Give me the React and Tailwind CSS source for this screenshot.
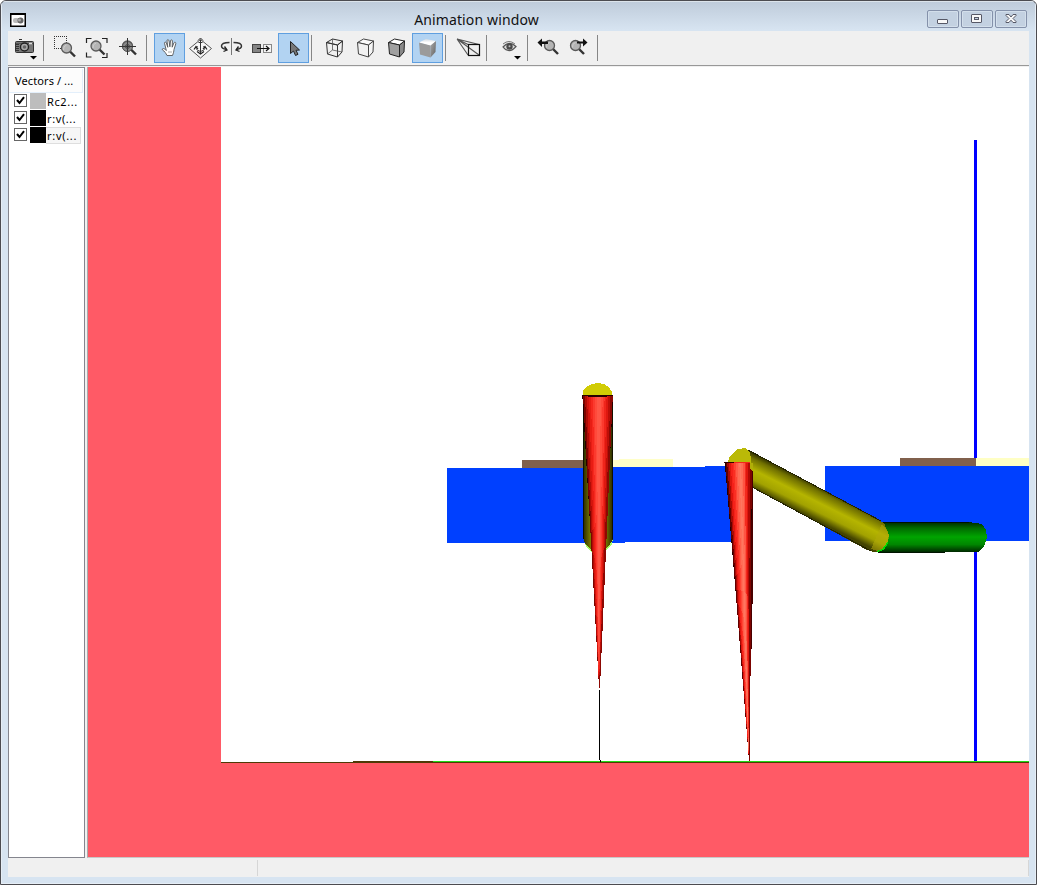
import React from "react";

/* Every toolbar glyph is drawn in window coordinates; x is the left edge of its button. */
function Tool({ x, label, w = 31, active = false, children }) {
  return (
    <button
      aria-label={label}
      className={
        active
          ? "h-[30px] shrink-0 bg-[#b2d3f2] outline-1 -outline-offset-1 outline-[#5f9fe0]"
          : "h-[30px] shrink-0"
      }
    >
      <svg width={w} height="30" viewBox={`${x} 33 ${w} 30`} fill="none" className="block">
        {children}
      </svg>
    </button>
  );
}

function Sep({ className }) {
  return <div className={`h-[26px] w-px shrink-0 bg-[#868686] ${className}`} />;
}

function Lens({ cx, cy, r = 5, dot = false }) {
  const k = r * 0.7;
  return (
    <g>
      <path d={`M${cx + k} ${cy + k}l5 5`} stroke="#333" strokeWidth="2.4" />
      <circle cx={cx} cy={cy} r={r} fill="#b4b4b4" stroke="#5a5a5a" strokeWidth="1.3" />
      {!dot && <path d={`M${cx - 3} ${cy + 2}q-.5-4 3-5`} stroke="#cfcfcf" />}
    </g>
  );
}

function Cube({ x, front = "none", side = "none", top = "none", line = "#333", wire = false }) {
  return (
    <g stroke={line} strokeLinejoin="round" strokeWidth="1">
      <path d={`M${x} 42.500l6-3.500 10 2-5 4z`} fill={top} />
      <path d={`M${x} 42.500l11 2.500v12L${x + 1} 54z`} fill={front} />
      <path d={`M${x + 11} 45l5-4-.5 11-4.500 5z`} fill={side} />
      {wire && <path d={`M${x + 6} 39v11l9.500 2M${x + 6} 50L${x + 1} 54`} strokeWidth=".8" stroke="#555" />}
    </g>
  );
}

function Toolbar() {
  return (
    <div className="flex h-[35px] shrink-0 items-start border-b border-[#989898] bg-[#f0f0f0] pt-[2px] pl-px">
      <Tool x={9} label="Capture">
        <path d="M19 39.5h3" stroke="#333" />
        <rect x="15.5" y="41.5" width="18" height="11" rx="1" fill="#777" stroke="#333" />
        <path d="M16 43.5h17" stroke="#555" />
        <path d="M15 44.5h4M15 46.5h4M15 48.5h4M15 50.5h4" stroke="#333" />
        <circle cx="24.5" cy="47" r="4" fill="#aaa" stroke="#222" strokeWidth="1.4" />
        <circle cx="24.5" cy="47" r="1.8" fill="#666" />
        <path d="M29 43.5h3" stroke="#ddd" strokeWidth="1.5" />
        <path d="M30 56h7l-3.5 3.5z" fill="#000" />
      </Tool>
      <Sep className="mt-[2px] ml-[3px] mr-[6px]" />
      <Tool x={50} label="Zoom area">
        <path
          d="M54 36.500h13M54 48.500h13M54.500 38v10M66.500 38v10"
          stroke="#333"
          strokeDasharray="1 1"
          shapeRendering="crispEdges"
        />
        <Lens cx={66.500} cy={48} />
      </Tool>
      <Tool x={81} label="Zoom to fit">
        <path d="M86.500 43v-4.500h5M102 38.500h5V43M86.500 52.500v4.500h5M102 57.500h5v-4.500" stroke="#222" strokeWidth="1.2" />
        <Lens cx={96} cy={46} />
      </Tool>
      <Tool x={112} label="Zoom target">
        <Lens cx={127.500} cy={46} dot />
        <circle cx="127.500" cy="46.500" r="5" fill="#888" stroke="#555" />
        <path d="M119 46.500h17M127.500 38v17" stroke="#333" />
        <circle cx="127.500" cy="46.500" r="2" stroke="#444" />
      </Tool>
      <Sep className="mt-[2px] ml-[3px] mr-[7px]" />
      <Tool x={154} label="Pan" active>
        <path
          d="M167 55.500c-1-2-2.500-4.500-4.500-5.500-.8-1.500 1-2.200 3-.3l.8.8-1.800-7.300c0-1.500 1.400-1.500 1.900-.2l1.400 4.300-.8-6.500c.1-1.600 1.700-1.500 2 0l.9 6 .6-6c.3-1.400 1.900-1.200 1.900.2l-.2 6.200 1.700-4.300c.8-1.300 2.300-.5 1.900.8L174 49.500c-.2 2-.5 3.500-1.500 6z"
          fill="#fff"
          stroke="#555"
          strokeWidth=".9"
        />
        <path d="M168 52h4" stroke="#aaa" />
      </Tool>
      <Tool x={185} label="Move">
        <path d="M189.500 48.500L200.500 39.500l11 9-11 9.500z" fill="#f8f8f8" stroke="#555" />
        <path d="M200.500 40v13M198.500 42.500h4M198 40.500l2.500-2.500 2.500 2.500M197.500 46c-2.500 3-1 4 3 5.500 4-1.500 5.500-2.500 3-5.500" stroke="#333" />
        <path d="M194 49.500l2-3 2 2.500M203 49l2-2.500 2 3M197 51.500l3.500 2.500 3.500-2.500" stroke="#222" strokeWidth="1.200" />
      </Tool>
      <Tool x={216} label="Rotate">
        <path d="M231.500 38v17" stroke="#777" />
        <path d="M229.500 42.500c-5 0-8 1.500-8 3.500s2 3 5 3.500M233.500 42.500c5 0 8 1.500 8 3.500s-2 3-5 3.500" stroke="#333" strokeWidth="1.500" />
        <path d="M224.500 46.500l2.500 3.500-3.500 1.500M238.500 46.500l-2.500 3.500 3.500 1.500" stroke="#222" strokeWidth="1.300" />
      </Tool>
      <Tool x={247} label="Translate">
        <rect x="252.500" y="44.500" width="8" height="8" fill="#848484" stroke="#444" />
        <rect x="263.500" y="44.500" width="8" height="8" fill="#f4f4f4" stroke="#888" />
        <path d="M257 48.500h12M266 46l3 2.500-3 2.500" stroke="#111" strokeWidth="1.200" />
      </Tool>
      <Tool x={278} label="Select" active>
        <path d="M290.500 41.500v12l3-2.500 2 4.500 2.500-1.200-2-4 3.500-.3z" fill="#777" stroke="#222" />
      </Tool>
      <Sep className="mt-[2px] ml-[2px] mr-[7px]" />
      <Tool x={319} label="Wireframe"><Cube x={326.500} wire /></Tool>
      <Tool x={350} label="Hidden lines"><Cube x={357.500} top="#fafafa" front="#f1f1f1" side="#f5f5f5" line="#444" /></Tool>
      <Tool x={381} label="Shaded with edges"><Cube x={388.500} top="#fff" front="#a0a0a0" side="#888" line="#222" /></Tool>
      <Tool x={412} label="Shaded" active>
        <defs>
          <linearGradient id="cubeTop" x1="0" x2="0" y1="0" y2="1">
            <stop offset="0" stopColor="#d4dbe2" />
            <stop offset=".5" stopColor="#fff" />
            <stop offset="1" stopColor="#fff" />
          </linearGradient>
          <linearGradient id="cubeSide" x1="0" x2="1" y1="0" y2="1">
            <stop offset="0" stopColor="#aaa" />
            <stop offset="1" stopColor="#606060" />
          </linearGradient>
        </defs>
        <path d="M419 42.500l7-3.500 10 2-5.500 5z" fill="url(#cubeTop)" />
        <path d="M419 42.500l11.500 3v12L420 54.500z" fill="#9b9b9b" />
        <path d="M430.500 45.500l5.500-4.500-.5 11-5 5.500z" fill="url(#cubeSide)" />
      </Tool>
      <Sep className="mt-[2px] ml-[2px] mr-[7px]" />
      <Tool x={453} label="Perspective">
        <path d="M457 39l11 16M457 39l11 5.500M457 39l22 5.500M457 39l22 16" stroke="#555" strokeWidth="1.100" />
        <rect x="468.500" y="44.500" width="11" height="11" stroke="#111" strokeWidth="1.200" />
      </Tool>
      <Sep className="mt-[2px] ml-[2px] mr-[7px]" />
      <Tool x={494} label="View">
        <path d="M503 47q6-7 13-.5-7 8-13 .5z" fill="#ddd" stroke="#555" strokeWidth="1.200" />
        <path d="M503 44q6-5 12 0" stroke="#777" />
        <circle cx="509.500" cy="46.500" r="3.200" fill="#4a4a4a" />
        <circle cx="509.500" cy="46.200" r="1" fill="#bbb" />
        <path d="M514 56h7l-3.500 3.500z" fill="#000" />
      </Tool>
      <Sep className="mt-[2px] ml-[2px] mr-[5px]" />
      <Tool x={533} label="Previous view">
        <Lens cx={549.500} cy={45.500} />
        <path d="M537.500 42.500l4.500-4v3h6v2.500h-6v3z" fill="#111" />
      </Tool>
      <Tool x={564} label="Next view">
        <Lens cx={575.500} cy={45.500} />
        <path d="M587.500 42.500l-4.500-4v3h-6v2h6v3z" fill="#111" />
      </Tool>
      <Sep className="mt-[2px] ml-[2px]" />
    </div>
  );
}

function VectorRow({ text, swatch, selected }) {
  return (
    <div className="flex h-[17px] items-start">
      <svg width="13" height="13" viewBox="0 0 13 13" className="mt-px shrink-0">
        <rect x=".5" y=".5" width="12" height="12" fill="#fff" stroke="#666" />
        <path d="M3 6l2.500 3L10 3.200" fill="none" stroke="#000" strokeWidth="2" />
      </svg>
      <span className={`ml-[3px] h-4 w-4 shrink-0 ${swatch}`} />
      <span
        className={
          selected
            ? "h-[17px] w-[35px] overflow-hidden border border-l-0 border-[#dedede] bg-[#f6f6f6] pl-px text-[11px] leading-[16px] tracking-[0.7px] whitespace-nowrap"
            : "h-[17px] w-[35px] overflow-hidden pt-px pl-px text-[11px] leading-[16px] tracking-[0.6px] whitespace-nowrap"
        }
      >
        {text}
      </span>
    </div>
  );
}

function VectorPanel() {
  return (
    <div className="flex w-[77px] shrink-0 flex-col border border-[#84858e] bg-white font-['Noto_Sans',sans-serif] text-black">
      <div className="mt-px mr-px h-[24px] border-r border-b border-[#e3effb] bg-[#fcfcfc] pl-[6px] text-[11px] leading-[23px] tracking-[0.1px] whitespace-nowrap">
        Vectors / ...
      </div>
      <div className="pl-[5px]">
        <VectorRow text="Rc2..." swatch="bg-[#bdbdbd]" />
        <VectorRow text="r:v(..." swatch="bg-black" />
        <VectorRow text="r:v(..." swatch="bg-black" selected />
      </div>
    </div>
  );
}

const CENTER_SHADES = [
  "#7a0500", "#b00c06", "#d4150d", "#e81d14", "#f5281e", "#fb3a2e", "#ff4a3b", "#ff5646",
  "#ff5646", "#ff4a3b", "#fb3a2e", "#f0251b", "#de1810", "#bd0f08", "#8c0803",
];
const TILT_SHADES = [
  "#600000", "#a80a05", "#dc150d", "#f5211a", "#fa2e22", "#ff4534", "#ff5c49", "#ff6d56",
  "#ff7660", "#ff6d56", "#ff5443", "#f42a1e", "#df160e", "#b30a05", "#7c0300",
];

/* A cone seen from the side: thin facets that all run to the tip. */
function Cone({ left, right, top, tipX, tipY, shades }) {
  const step = (right - left) / shades.length;
  return (
    <g>
      <path d={`M${left - 0.7} ${top}L${right + 0.5} ${top}L${tipX} ${tipY - 4}z`} fill="#260000" />
      {shades.map((shade, i) => (
        <path
          key={i}
          d={`M${left + i * step} ${top}H${left + (i + 1) * step + 0.3}L${tipX + 0.5} ${tipY}H${tipX - 0.5}z`}
          fill={shade}
        />
      ))}
    </g>
  );
}

function Scene() {
  return (
    <svg width="941" height="790" viewBox="88 67 941 790" shapeRendering="crispEdges" className="block shrink-0">
      <defs>
        <linearGradient id="post" x1="0" x2="1" y1="0" y2="0">
          <stop offset="0" stopColor="#252500" />
          <stop offset=".22" stopColor="#707000" />
          <stop offset=".5" stopColor="#bcbc00" />
          <stop offset=".78" stopColor="#707000" />
          <stop offset="1" stopColor="#252500" />
        </linearGradient>
        <linearGradient id="arm" gradientUnits="userSpaceOnUse" x1="823" y1="486" x2="808" y2="516">
          <stop offset="0" stopColor="#1b1b00" />
          <stop offset=".2" stopColor="#707000" />
          <stop offset=".5" stopColor="#b5b500" />
          <stop offset=".76" stopColor="#a2a200" />
          <stop offset="1" stopColor="#444400" />
        </linearGradient>
        <linearGradient id="rod" x1="0" x2="0" y1="0" y2="1">
          <stop offset="0" stopColor="#002800" />
          <stop offset=".2" stopColor="#006a00" />
          <stop offset=".5" stopColor="#00a500" />
          <stop offset=".75" stopColor="#008600" />
          <stop offset="1" stopColor="#002800" />
        </linearGradient>
      </defs>

      <rect x="88" y="67" width="941" height="790" fill="#ff5a66" />
      <rect x="221" y="67" width="808" height="695" fill="#fff" />
      <rect x="221" y="762" width="808" height="1" fill="#4f3906" />
      <rect x="353" y="761" width="676" height="1" fill="#24d915" />
      <path d="M353 761h80v1h-80z" fill="#4f3906" />

      <rect x="974" y="140" width="3" height="621" fill="#0000ff" />

      <rect x="522" y="460" width="62" height="8" fill="#80604c" />
      <path d="M613 460l12-1h48v8h-60z" fill="#ffffc8" />
      <path d="M447 468h137v-1h121v-1h27v76H625v1H447z" fill="#0040ff" />
      <rect x="900" y="458" width="76" height="8" fill="#80604c" />
      <rect x="976" y="458" width="53" height="8" fill="#ffffc4" />
      <rect x="825" y="466" width="204" height="75" fill="#0040ff" />

      <path d="M583 538l3 8 5 6h14l7-8 1-6z" fill="#a5ff67" />
      <path d="M583 395h30v144l-4 7-4 3h-14l-5-4-3-7z" fill="url(#post)" />
      <path d="M583.500 395v144" stroke="#111100" />
      <path d="M612.500 395v144" stroke="#111100" />
      <path d="M583 395v-4l3-4 6-3 5-1 7 1 5 3 3 5v3z" fill="#d1cc05" />
      <Cone left={583} right={612.500} top={395} tipX={599.500} tipY={688} shades={CENTER_SHADES} />
      <rect x="582" y="395" width="31" height="1" fill="#280000" />
      <rect x="588" y="396" width="19" height="1" fill="#280000" />
      <rect x="599" y="690" width="1" height="70" fill="#000" />
      <rect x="600" y="760" width="1" height="2" fill="#000" />

      <path d="M881 522h88l13 2 4 6 1 8-3 8-5 6H876z" fill="url(#rod)" />
      <rect x="881" y="522" width="88" height="1" fill="#001300" />
      <rect x="878" y="552" width="67" height="1" fill="#001300" />
      <path d="M748 450L884 523l5 12-2 9-8 8h-5l-7-2L752 487z" fill="url(#arm)" />
      <path d="M882 524l4 5 3 6-1 9-6 5-5 2-6-2z" fill="#b0a90a" opacity=".55" />
      <path d="M877 551.500l6-2 5-7" fill="none" stroke="#00e000" strokeWidth="1.500" />
      <path d="M748 450l133 71M752 487l119 64" fill="none" stroke="#242400" />
      <path d="M728 463l1-5 5-6 4-3 7-1 5 4 1 8v6z" fill="#bab908" />

      <path d="M750 463l1 6 2 3v110l-2 90z" fill="#480000" />
      <Cone left={725.500} right={751.500} top={463} tipX={749.500} tipY={761} shades={TILT_SHADES} />
      <path d="M750 463h3v7h-2l-1-3z" fill="#b1ae08" />
      <rect x="724" y="462" width="10" height="1" fill="#300000" />
      <rect x="734" y="462" width="16" height="1" fill="#f4281c" />
    </svg>
  );
}

function Caption({ label, className, children }) {
  return (
    <button
      aria-label={label}
      className={`flex h-[18px] items-center justify-center rounded-[2px] border border-[#8491aa] bg-[#c3d1e1] ring-1 ring-[#d3dfeb] ring-inset ${className}`}
    >
      <svg width="14" height="12" viewBox="0 0 14 12" fill="#f8f8f8" stroke="#565866" className="block">
        {children}
      </svg>
    </button>
  );
}

function TitleBar() {
  return (
    <div className="flex h-[29px] shrink-0 items-start">
      <svg width="16" height="14" viewBox="0 0 16 14" className="mt-[11px] ml-[9px] shrink-0">
        <rect x=".75" y=".75" width="14.500" height="12.500" fill="#fff" stroke="#000" strokeWidth="1.500" />
        <path d="M0 1h16" stroke="#000" strokeWidth="2" />
        <rect x="3" y="5" width="8" height="5" rx="2" fill="#bbb" />
        <circle cx="10.500" cy="7.500" r="3" fill="#666" />
        <circle cx="9.500" cy="7" r="1.500" fill="#aaa" />
      </svg>
      <h1 className="mt-[6px] flex-1 text-center font-['Noto_Sans',sans-serif] text-[14px] leading-[24px] font-normal tracking-[0.13px] text-[#111]">
        Animation window
      </h1>
      <div className="mt-[8px] mr-[9px] flex justify-end">
        <Caption label="Minimize" className="w-[32px]">
          <rect x="1.500" y="6.500" width="10" height="4" rx=".5" />
        </Caption>
        <Caption label="Maximize" className="ml-[2px] w-[32px]">
          <rect x="1.500" y="1.500" width="10" height="8" rx=".5" />
          <rect x="4.500" y="4.500" width="4" height="2" fill="#c3d1e1" />
        </Caption>
        <Caption label="Close" className="ml-[2px] w-[32px]">
          <path d="M2 1.500h3L7 4l2-2.500h3v1L9 5.500l3 3v1H9L7 7.200 5 9.500H2v-1l3-3-3-3z" />
        </Caption>
      </div>
    </div>
  );
}

export default function App() {
  return (
    <div className="h-[885px] w-[1037px] overflow-hidden bg-white">
      <div className="flex h-full w-full flex-col overflow-hidden rounded-t-[6px] border border-[#4c4c51] bg-[linear-gradient(to_bottom,#becbda_0px,#d7e4f1_29px)]">
        <div className="flex min-h-0 flex-1 flex-col border border-[#e6eef6] border-t-[#dce4eb]">
          <div className="-mx-px">
            <TitleBar />
          </div>
          <main className="mx-[6px] flex h-[846px] shrink-0 flex-col bg-[#f0f0f0]">
            <Toolbar />
            <div className="mt-px flex h-[791px] shrink-0">
              <VectorPanel />
              <div className="ml-[2px] flex border-b border-l border-b-[#c8c8c8] border-l-[#aaa]">
                <Scene />
              </div>
            </div>
            <div className="flex min-h-0 flex-1 pt-[2px] pb-px">
              <div className="w-[250px] border-r border-[#d6d6d6]" />
              <div className="flex-1 border-r border-[#d6d6d6]" />
            </div>
          </main>
        </div>
      </div>
    </div>
  );
}
